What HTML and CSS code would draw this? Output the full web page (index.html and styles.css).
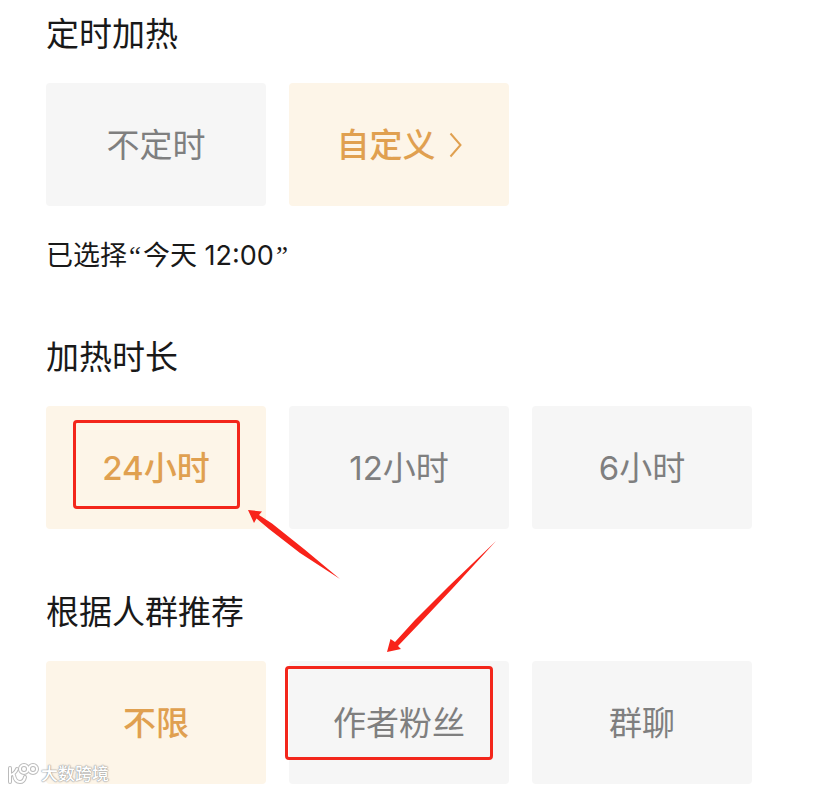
FILE: index.html
```html
<!DOCTYPE html>
<html lang="zh-CN">
<head>
<meta charset="utf-8">
<meta name="viewport" content="width=device-width, initial-scale=1">
<title>加热设置</title>
<link rel="stylesheet" href="styles.css">
</head>
<body>
<main class="settings">
  <section class="group">
    <h2 class="title">定时加热</h2>
    <div class="options">
      <div class="cell"><button class="option" type="button">不定时</button></div>
      <div class="cell">
        <button class="option selected" type="button">自定义<svg class="chevron" viewBox="0 0 13 26" aria-hidden="true"><path d="M1.500 1.500L11.500 13L1.500 24.500"/></svg></button>
      </div>
    </div>
    <p class="note">已选择<span class="quote">“</span>今天 12:00<span class="quote">”</span></p>
  </section>

  <section class="group">
    <h2 class="title">加热时长</h2>
    <div class="options">
      <div class="cell">
        <button class="option selected" type="button">24小时</button>
        <span class="mark mark-duration"></span>
        <svg class="arrow arrow-duration" viewBox="0 0 92 69" aria-hidden="true"><path d="M0 0L14 1.500L11 5L24 13.500L56 39L92 69L52 43L21 19L8.500 8.500L6 13Z"/></svg>
      </div>
      <div class="cell"><button class="option" type="button">12小时</button></div>
      <div class="cell"><button class="option" type="button">6小时</button></div>
    </div>
  </section>

  <section class="group">
    <h2 class="title">根据人群推荐</h2>
    <div class="options">
      <div class="cell"><button class="option selected" type="button">不限</button></div>
      <div class="cell">
        <button class="option" type="button">作者粉丝</button>
        <span class="mark mark-audience"></span>
        <svg class="arrow arrow-audience" viewBox="0 0 109 111" aria-hidden="true"><path d="M0 111L3.500 98L8 101L28 79L62 45L109 0L65 48L33 82L11 105L14 108Z"/></svg>
      </div>
      <div class="cell"><button class="option" type="button">群聊</button></div>
    </div>
  </section>
</main>

<div class="watermark">
  <svg class="logo" viewBox="0 0 32 22" aria-hidden="true">
    <g class="logo-edge"><path d="M3 5V19M10 6Q8 11 3 12M7 12Q8 19 13 19Q17 19 18 14"/><circle cx="17" cy="6" r="4"/><circle cx="26" cy="6" r="4"/></g>
    <g class="logo-line"><path d="M3 5V19M10 6Q8 11 3 12M7 12Q8 19 13 19Q17 19 18 14"/><circle cx="17" cy="6" r="4"/><circle cx="26" cy="6" r="4"/></g>
  </svg>
  <span>大数跨境</span>
</div>
</body>
</html>
```

FILE: styles.css
```css
* {
  box-sizing: border-box;
}

body {
  margin: 0;
  background: #fff;
  color: #191919;
  font-family: Inter, "Noto Sans CJK SC", sans-serif;
}

.settings {
  padding: 10px 76px 6px 46px;
}

.group + .group {
  margin-top: 59px;
}

.title {
  margin: 0 0 25px;
  font-size: 33px;
  font-weight: 400;
  line-height: 48px;
}

.options {
  display: grid;
  grid-template-columns: repeat(3, 1fr);
  gap: 23px;
}

.cell {
  position: relative;
}

.option {
  display: flex;
  align-items: center;
  justify-content: center;
  gap: 13px;
  width: 100%;
  min-height: 123px;
  padding: 0;
  border: 0;
  border-radius: 4px;
  background: #f6f6f6;
  color: #7f7f7f;
  font: inherit;
  font-size: 33px;
  line-height: 48px;
}

.option.selected {
  background: #fdf5e8;
  color: #e0a050;
  font-weight: 500;
}

.chevron {
  width: 13px;
  height: 26px;
  fill: none;
  stroke: currentColor;
  stroke-width: 2;
}

.note {
  margin: 30px 0 0;
  font-size: 27px;
  line-height: 40px;
}

.quote {
  padding: 0 2px;
  font-family: "Liberation Serif", serif;
  line-height: 1;
}

.group:first-child + .group {
  margin-top: 57px;
}

.mark {
  position: absolute;
  border: 3px solid #f3261b;
  border-radius: 4px;
  pointer-events: none;
}

.mark-duration {
  left: 27px;
  top: 14px;
  width: 167px;
  height: 89px;
}

.mark-audience {
  left: -4px;
  top: 5px;
  width: 208px;
  height: 94px;
}

.arrow {
  position: absolute;
  fill: #f8231a;
  pointer-events: none;
}

.arrow-duration {
  left: 202px;
  top: 104px;
  width: 92px;
  height: 69px;
}

.arrow-audience {
  left: 98px;
  top: -120px;
  width: 109px;
  height: 111px;
}

.watermark {
  position: absolute;
  left: 7px;
  top: 762px;
  display: flex;
  align-items: center;
  gap: 2px;
  color: #fff;
  font-size: 17px;
  font-weight: 500;
  line-height: 24px;
  text-shadow: 0 0 1px #999, 0 0 1px #999, 0 0 2px #aaa;
}

.logo {
  width: 32px;
  height: 22px;
  fill: none;
  stroke-linecap: round;
}

.logo-edge {
  stroke: #bbb;
  stroke-width: 4;
}

.logo-line {
  stroke: #fff;
  stroke-width: 2;
}
```
